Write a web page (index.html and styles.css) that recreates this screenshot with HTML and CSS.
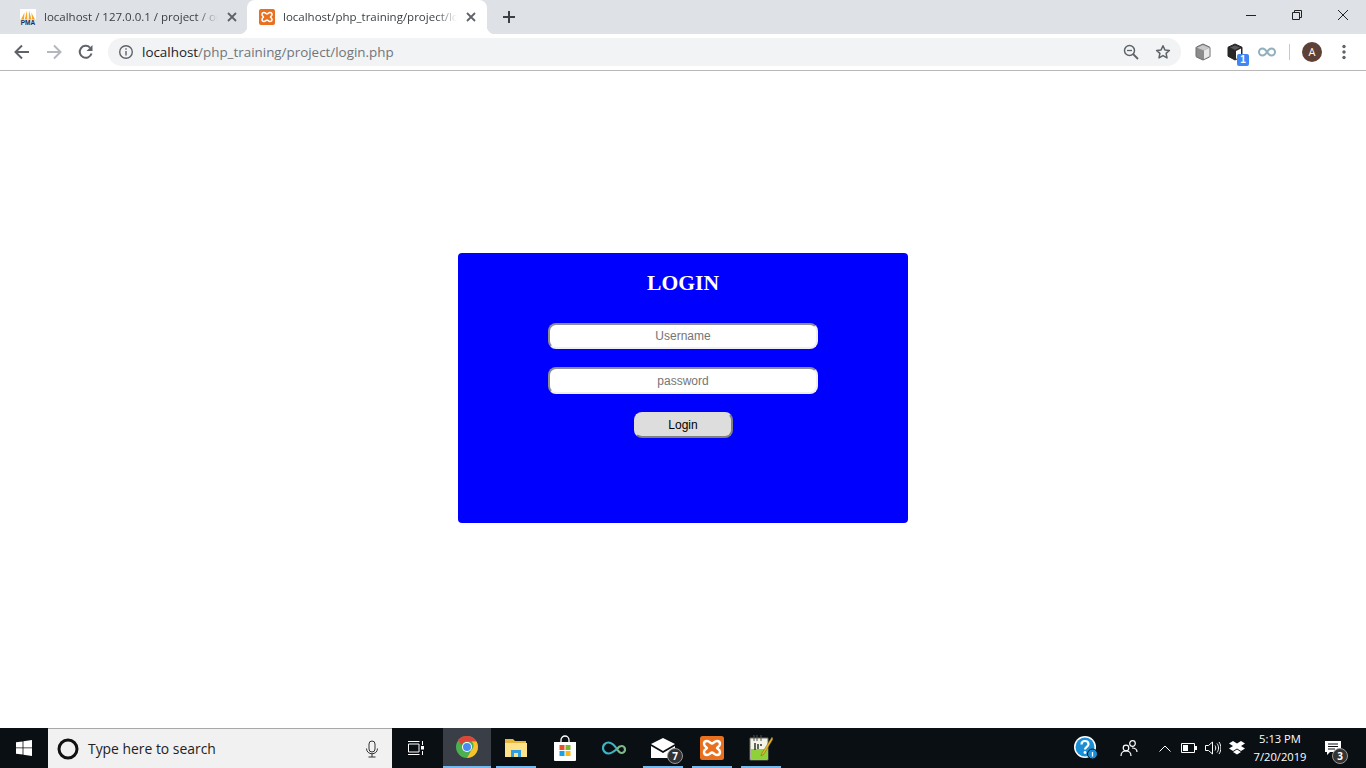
FILE: index.html
```html
<!DOCTYPE html>
<html lang="en">
<head>
<meta charset="utf-8">
<title>localhost/php_training/project/login.php</title>
<link rel="stylesheet" href="styles.css">
</head>
<body>
<div class="window">
  <header class="chrome">
    <div class="tabstrip">
      <div class="tab tab-back">
        <svg class="favicon" width="16" height="16" viewBox="0 0 16 16"><rect width="16" height="10.500" fill="#fff"/><path d="M1 10.500 4.500 3.500 4 10.500zM4.800 10.500 7 1.500 7.300 10.500zM8.700 10.500 9 1.500 11.500 10.500zM12.200 10.500 11.300 3.500 15 10.500z" fill="#f5a623"/><text x="8" y="16" class="pma">PMA</text></svg>
        <span class="tab-title tab-title-back">localhost / 127.0.0.1 / project / or</span>
        <svg class="tab-close" width="12" height="12" viewBox="0 0 12 12"><path d="M2 2l8 8M10 2l-8 8" stroke="#5f6368" stroke-width="1.800" fill="none"/></svg>
      </div>
      <div class="tab tab-active">
        <svg class="favicon" width="16" height="16" viewBox="0 0 16 16"><rect width="16" height="16" rx="2" fill="#e8701f"/><path d="M5 3.500C6.500 3.500 7 5 8 5s1.500-1.500 3-1.500 2 1 2 2C13 7 11.500 7.300 11.500 8s1.500 1 1.500 2.500-1 2-2 2c-1.500 0-2-1.500-3-1.500s-1.500 1.500-3 1.500-2-1-2-2C3 9 4.500 8.700 4.500 8S3 7 3 5.500s1-2 2-2z" fill="none" stroke="#fff" stroke-width="1.500"/></svg>
        <span class="tab-title">localhost/php_training/project/lo</span>
        <svg class="tab-close" width="12" height="12" viewBox="0 0 12 12"><path d="M2 2l8 8M10 2l-8 8" stroke="#5f6368" stroke-width="1.800" fill="none"/></svg>
      </div>
      <svg class="new-tab" width="12" height="12" viewBox="0 0 12 12"><path d="M6 0v12M0 6h12" stroke="#3c4043" stroke-width="2" fill="none"/></svg>
      <div class="window-controls">
        <span class="win-btn"><svg width="10" height="10" viewBox="0 0 10 10"><path d="M0 5.500h10" stroke="#222" fill="none"/></svg></span>
        <span class="win-btn"><svg width="10" height="10" viewBox="0 0 10 10"><path d="M.5 2.500h7v7h-7zM2.500 2.500v-2h7v7h-2" stroke="#222" fill="none"/></svg></span>
        <span class="win-btn"><svg width="10" height="10" viewBox="0 0 10 10"><path d="M0 0l10 10M10 0L0 10" stroke="#222" fill="none"/></svg></span>
      </div>
    </div>
    <div class="toolbar">
      <span class="tool"><svg width="16" height="16" viewBox="0 0 16 16"><path d="M15 8H2M8 1.500 1.500 8 8 14.500" stroke="#5f6368" stroke-width="2" fill="none"/></svg></span>
      <span class="tool"><svg width="16" height="16" viewBox="0 0 16 16"><path d="M1 8h13M8 1.500 14.500 8 8 14.500" stroke="#b4b7bb" stroke-width="2" fill="none"/></svg></span>
      <span class="tool"><svg width="16" height="16" viewBox="0 0 16 16"><path d="M13.500 9.500A6 6 0 1 1 12 3.600" stroke="#5f6368" stroke-width="2" fill="none"/><path d="M14.500 1v6h-6z" fill="#5f6368"/></svg></span>
      <div class="omnibox">
        <svg class="info" width="16" height="16" viewBox="0 0 16 16"><circle cx="8" cy="8" r="6.300" stroke="#5f6368" stroke-width="1.400" fill="none"/><path d="M7.300 7h1.400v4.500H7.300zM7.300 4.300h1.400v1.400H7.300z" fill="#5f6368"/></svg>
        <span class="url"><span class="url-host">localhost</span>/php_training/project/login.php</span>
        <span class="tool"><svg width="16" height="16" viewBox="0 0 16 16"><circle cx="6.500" cy="6.500" r="5" stroke="#5f6368" stroke-width="1.500" fill="none"/><path d="M10 10l5 5" stroke="#5f6368" stroke-width="1.800"/><path d="M4 6.500h5" stroke="#5f6368" stroke-width="1.300"/></svg></span>
        <span class="tool"><svg width="16" height="16" viewBox="0 0 16 16"><path d="M8 1.800l1.900 4.100 4.500.5-3.300 3 .9 4.500L8 11.600l-4 2.300.9-4.500-3.300-3 4.500-.5z" stroke="#5f6368" stroke-width="1.500" fill="none" stroke-linejoin="round"/></svg></span>
      </div>
      <span class="tool tool-first"><svg width="18" height="18" viewBox="0 0 18 18"><path d="M9 1l6.500 3c.4.200.5.500.5 1v8c0 .5-.2.800-.5 1L9 17l-6.500-3c-.4-.2-.5-.5-.5-1V5c0-.5.200-.8.500-1z" fill="#8c8c8c" stroke="#6e6e6e"/><path d="M9 2l6 2.800L10 7.500 3 4.800z" fill="#c9c9c9"/><path d="M10 7.500l5.500-2.700v8.400L10 16z" fill="#e8e8e8"/></svg></span>
      <span class="tool tool-badged"><svg width="18" height="18" viewBox="0 0 18 18"><path d="M9 1l7 3.200v9L9 17l-7-3.800v-9z" fill="#262626" stroke="#262626" stroke-linejoin="round"/><path d="M10 8l5-2.500v7L10 16z" fill="#fff"/><path d="M9 2.500l5 2L9 7 4 4.500z" fill="#5a5a5a"/></svg><span class="ext-badge">1</span></span>
      <span class="tool"><svg width="18" height="10" viewBox="0 0 18 10"><path d="M9 5C7.500 2.500 6 1.500 4.500 1.500a3.500 3.500 0 0 0 0 7C6 8.500 7.500 7.500 9 5c1.500-2.500 3-3.500 4.500-3.500a3.500 3.500 0 0 1 0 7C12 8.500 10.500 7.500 9 5z" fill="none" stroke="#8fb0bd" stroke-width="2"/></svg></span>
      <span class="tool-sep"></span>
      <span class="avatar">A</span>
      <span class="tool tool-menu"><svg width="4" height="16" viewBox="0 0 4 16"><circle cx="2" cy="2.500" r="1.700" fill="#5f6368"/><circle cx="2" cy="8" r="1.700" fill="#5f6368"/><circle cx="2" cy="13.500" r="1.700" fill="#5f6368"/></svg></span>
    </div>
  </header>

  <main class="page">
    <form class="login-card">
      <h2 class="login-title">LOGIN</h2>
      <input class="field" type="text" placeholder="Username">
      <input class="field" type="password" placeholder="password">
      <button class="login-btn" type="button">Login</button>
    </form>
  </main>

  <footer class="taskbar">
    <span class="start"><svg width="16" height="16" viewBox="0 0 16 16"><path d="M0 2.300 6.600 1.400v6.100H0zM7.400 1.300 16 0v7.500H7.400zM0 8.300h6.600v6.200L0 13.700zM7.400 8.300H16V16l-8.600-1.300z" fill="#fff"/></svg></span>
    <div class="search">
      <svg class="cortana" width="22" height="22" viewBox="0 0 22 22"><circle cx="11" cy="11" r="9" fill="none" stroke="#111" stroke-width="3"/></svg>
      <span class="search-text">Type here to search</span>
      <svg class="mic" width="14" height="18" viewBox="0 0 14 18"><rect x="4" y="1" width="6" height="11" rx="3" fill="none" stroke="#333"/><path d="M1.500 8.500c0 7 11 7 11 0M7 14v3M3.500 17h7" fill="none" stroke="#333"/></svg>
    </div>
    <span class="task-view"><svg width="16" height="14" viewBox="0 0 16 14"><path d="M.5 3h10.500v8H.5zM0 .5h11.500M0 13.500h11.500M14.500 0v4M14.500 10v4" stroke="#fff" fill="none"/><rect x="13" y="5" width="3" height="3.500" fill="#fff"/></svg></span>
    <div class="task-apps">
      <span class="app app-active"><svg width="24" height="24" viewBox="0 0 24 24"><circle cx="12" cy="12" r="11" fill="#4caf50"/><path d="M12 1a11 11 0 0 1 9.500 5.500H12a5.500 5.500 0 0 0-5.300 4L3 4.800A11 11 0 0 1 12 1z" fill="#e0453a"/><path d="M21.500 6.500A11 11 0 0 1 12 23l4.700-8.200a5.500 5.500 0 0 0 0-8.300z" fill="#fbc02d"/><circle cx="12" cy="12" r="5" fill="#fff"/><circle cx="12" cy="12" r="4" fill="#4a8af4"/></svg></span>
      <span class="app app-open"><svg width="22" height="20" viewBox="0 0 22 20"><path d="M0 1h8l2 2h11v3H0z" fill="#e7b63f"/><path d="M0 5h22v14H0z" fill="#fde28a"/><path d="M6 12h10v7h-3v-4H9v4H6z" fill="#2f9fe0"/></svg></span>
      <span class="app"><svg width="24" height="26" viewBox="0 0 24 26"><path d="M8 8V5a4 4 0 0 1 8 0v3" fill="none" stroke="#fff" stroke-width="1.300"/><path d="M1 7h22v18a1 1 0 0 1-1 1H2a1 1 0 0 1-1-1z" fill="#fff"/><rect x="6.500" y="10" width="5" height="5" fill="#e8502a"/><rect x="12.500" y="10" width="5" height="5" fill="#7cb928"/><rect x="6.500" y="16" width="5" height="5" fill="#19a3e4"/><rect x="12.500" y="16" width="5" height="5" fill="#fcb814"/></svg></span>
      <span class="app"><svg width="24" height="14" viewBox="0 0 24 14"><path d="M15 8C12 3.500 9.500 1.500 6.500 1.500a5.500 5.500 0 0 0 0 11C9.500 12.500 12 10.500 15 8" fill="none" stroke="#3fb2c4" stroke-width="2.200"/><path d="M15 8c1.500-2 3-3 4.500-3a3.500 3.500 0 0 1 0 7c-1.500 0-3-1.500-4.500-4" fill="none" stroke="#7fb98a" stroke-width="2.200"/></svg></span>
      <span class="app app-open"><svg width="24" height="20" viewBox="0 0 24 20"><path d="M0 6 12 0l12 6-12 7z" fill="#fff"/><path d="M0 8l12 7 12-7v12H0z" fill="#fff"/></svg><span class="count-badge count-mail">7</span></span>
      <span class="app app-open"><svg width="24" height="24" viewBox="0 0 24 24"><rect width="24" height="24" rx="2.500" fill="#e8701f"/><path d="M7 5C9.500 5 10.500 7.500 12 7.500S14.500 5 17 5s3 2 3 3c0 2.500-3 3-3 4s3 1.500 3 4-1.500 3-3 3c-2.500 0-3.500-2.500-5-2.500S9.500 19 7 19s-3-2-3-3c0-2.500 3-3 3-4S4 10.500 4 8s1.500-3 3-3z" fill="none" stroke="#fff" stroke-width="2.400"/></svg></span>
      <span class="app app-open"><svg width="24" height="26" viewBox="0 0 24 26"><path d="M1 3h18v22H1z" fill="#f3f3e6" stroke="#6b6b5e"/><path d="M2 14h16v10H2z" fill="#8fd13a"/><path d="M5 0v6M8 0v6M12 0v6" stroke="#555" stroke-width="1"/><path d="M6 8v7M9 9v5M12 9v2" stroke="#333" stroke-width="1.500"/><path d="M23 2 13 18l-1 3 3-2L24 4z" fill="#e8b92d" stroke="#7a5a10" stroke-width=".5"/></svg></span>
    </div>
    <div class="tray">
      <span class="tray-help"><svg width="24" height="24" viewBox="0 0 24 24"><circle cx="11" cy="11" r="11" fill="#fff"/><circle cx="11" cy="11" r="9.500" fill="#1a8fd6"/><path d="M7.500 8.500C7.500 6 9 5 11 5s3.500 1.300 3.500 3.200c0 2.600-3.500 2.600-3.500 5.300" fill="none" stroke="#fff" stroke-width="2.200"/><circle cx="11" cy="16.500" r="1.400" fill="#fff"/><circle cx="18.500" cy="18" r="5" fill="#1a8fd6" stroke="#0a0f14"/><path d="M18.500 16v4.500" stroke="#fff" stroke-width="1.300"/></svg></span>
      <span class="tray-people"><svg width="18" height="16" viewBox="0 0 18 16"><circle cx="6" cy="8" r="2.800" fill="none" stroke="#fff" stroke-width="1.200"/><path d="M1 16c0-3 2-5 5-5s5 2 5 5" fill="none" stroke="#fff" stroke-width="1.200"/><circle cx="12.500" cy="3.500" r="2.800" fill="none" stroke="#fff" stroke-width="1.200"/><path d="M12 8c3 0 5 1.500 5 4" fill="none" stroke="#fff" stroke-width="1.200"/></svg></span>
      <span class="tray-icon"><svg width="12" height="7" viewBox="0 0 12 7"><path d="M.5 6.500 6 1l5.500 5.500" fill="none" stroke="#fff"/></svg></span>
      <span class="tray-icon"><svg width="16" height="10" viewBox="0 0 16 10"><path d="M.5.500h13v9H.5z" fill="none" stroke="#fff"/><rect x="2" y="2" width="5" height="6" fill="#fff"/><rect x="14" y="3" width="2" height="4" fill="#fff"/></svg></span>
      <span class="tray-icon"><svg width="16" height="14" viewBox="0 0 16 14"><path d="M.5 4.500h3L7.500 1v12l-4-3.500h-3z" fill="none" stroke="#fff"/><path d="M10 4.500c1 1.500 1 3.500 0 5M12 2.500c2 2.500 2 6.500 0 9M14 1c2.500 3.500 2.500 8.500 0 12" fill="none" stroke="#fff"/></svg></span>
      <span class="tray-icon"><svg width="16" height="14" viewBox="0 0 16 14"><path d="M4 0 8 2.500 12 0l4 2.500L12 5l4 2.500L12 10 8 7.500 4 10 0 7.500 4 5 0 2.500zM4 11l4-2.500 4 2.500-4 2.500z" fill="#fff"/></svg></span>
      <div class="clock"><span>5:13 PM</span><span>7/20/2019</span></div>
      <span class="notify"><svg width="16" height="15" viewBox="0 0 16 15"><path d="M0 0h16v11H5l-3 3v-3H0z" fill="#fff"/><path d="M3 3h10M3 5.500h10M3 8h7" stroke="#0a0f14"/></svg><span class="count-badge count-notify">3</span></span>
    </div>
  </footer>
</div>
</body>
</html>
```
FILE: styles.css
```css
* { box-sizing: border-box; }
html, body { margin: 0; padding: 0; }
.window {
  width: 1366px;
  height: 768px;
  display: flex;
  flex-direction: column;
  overflow: hidden;
  background: #fff;
  font-family: "Open Sans", "Noto Sans", sans-serif;
}

/* browser frame */
.chrome { flex: none; }
.tabstrip {
  height: 34px;
  display: flex;
  align-items: flex-end;
  padding-left: 8px;
  background: #dee1e6;
}
.tab {
  height: 34px;
  display: flex;
  align-items: center;
  gap: 8px;
  padding-left: 12px;
  font-size: 11.5px;
  color: #3c4043;
  position: relative;
}
.tab-back { width: 239px; padding-right: 9px; }
.tab-active {
  width: 240px;
  padding-right: 10px;
  background: #fff;
  border-radius: 8px 8px 0 0;
  color: #3c4043;
}
.tab-active::before,
.tab-active::after {
  content: "";
  position: absolute;
  bottom: 0;
  width: 8px;
  height: 8px;
}
.tab-active::before {
  left: -8px;
  background: radial-gradient(circle at 0 0, transparent 8px, #fff 8.5px);
}
.tab-active::after {
  right: -8px;
  background: radial-gradient(circle at 100% 0, transparent 8px, #fff 8.5px);
}
.favicon { flex: none; }
.pma { font: bold 6.5px "Liberation Sans", sans-serif; fill: #1f2a5a; text-anchor: middle; }
.tab-title {
  flex: 1;
  min-width: 0;
  margin-bottom: 2px;
  white-space: nowrap;
  -webkit-mask-image: linear-gradient(to right, #000 88%, transparent 100%);
  mask-image: linear-gradient(to right, #000 88%, transparent 100%);
}
.tab-close { flex: none; }
.new-tab { flex: none; margin: 0 0 11px 16px; }
.window-controls { margin-left: auto; display: flex; align-self: stretch; }
.win-btn {
  width: 46px;
  height: 30px;
  display: flex;
  align-items: center;
  justify-content: center;
}

.toolbar {
  height: 37px;
  display: flex;
  align-items: center;
  padding: 0 6px 1px;
  background: #fff;
  border-bottom: 1px solid #b8b8b8;
}
.tool {
  flex: none;
  width: 32px;
  height: 28px;
  display: flex;
  align-items: center;
  justify-content: center;
  position: relative;
}
.omnibox {
  flex: 1;
  height: 28px;
  margin: 0 6px;
  padding: 0 2px 0 10px;
  display: flex;
  align-items: center;
  gap: 8px;
  border-radius: 14px;
  background: #f1f3f4;
}
.omnibox .tool { margin-left: -8px; }
.omnibox .tool:first-of-type { margin-left: 0; }
.info { flex: none; }
.url {
  flex: 1;
  font-size: 13.4px;
  color: #70757a;
  white-space: nowrap;
}
.url-host { color: #202124; }
.ext-badge {
  position: absolute;
  left: 18px;
  top: 16px;
  width: 12px;
  height: 12px;
  border-radius: 2px;
  background: #3f87f5;
  color: #fff;
  font: bold 10px/12px "Liberation Sans", sans-serif;
  text-align: center;
}
.tool-sep {
  flex: none;
  width: 1px;
  height: 16px;
  margin-left: 6px;
  background: #c6c8cb;
}
.avatar {
  flex: none;
  width: 20px;
  height: 20px;
  margin-left: 12px;
  border-radius: 50%;
  background: #5d4037;
  color: #fff;
  font-size: 11px;
  line-height: 20px;
  text-align: center;
}
.tool-menu { margin-left: 6px; }

/* page content */
.page {
  flex: 1;
  min-height: 0;
  padding-top: 182px;
  background: #fff;
}
.login-card {
  width: 450px;
  height: 270px;
  margin: 0 auto;
  padding-top: 18px;
  display: flex;
  flex-direction: column;
  align-items: center;
  gap: 18px;
  border-radius: 4px;
  background: #0000ff;
}
.login-title {
  margin: 0 0 9px;
  font: bold 21.6px/25px "Liberation Serif", serif;
  color: #fff;
}
.field {
  width: 270px;
  height: 26.400px;
  padding: 0 4px;
  border-width: 2px;
  border-style: solid;
  border-color: #8f8f8f #eeeeee #eeeeee #8f8f8f;
  border-radius: 8px;
  background: #fff;
  font: 12px "Liberation Sans", sans-serif;
  text-align: center;
  outline: none;
}
.field::placeholder { color: #757575; opacity: 1; }
.login-btn {
  width: 99px;
  height: 26.400px;
  padding: 0;
  border-width: 2px;
  border-style: solid;
  border-color: #dddddd #808080 #808080 #dddddd;
  border-radius: 8px;
  background: #dddddd;
  color: #000;
  font: 12px "Liberation Sans", sans-serif;
}

/* taskbar */
.taskbar {
  flex: none;
  height: 40px;
  display: flex;
  background: #0a0f14;
  color: #fff;
}
.start {
  flex: none;
  width: 48px;
  display: flex;
  align-items: center;
  justify-content: center;
}
.search {
  flex: none;
  width: 344px;
  display: flex;
  align-items: center;
  padding: 0 12px 0 9px;
  gap: 9px;
  background: #f1f1f1;
  border-top: 1px solid #a8a8a8;
  color: #222;
}
.cortana { flex: none; }
.search-text { flex: 1; font-size: 13.9px; }
.mic { flex: none; margin-right: 1px; }
.task-view {
  flex: none;
  width: 48px;
  display: flex;
  align-items: center;
  justify-content: center;
}
.task-apps { display: flex; gap: 1px; margin-left: 3px; }
.app {
  width: 48px;
  height: 40px;
  display: flex;
  align-items: center;
  justify-content: center;
  position: relative;
}
.app-active { background: #3a3f47; border-bottom: 2px solid #76b9ed; }
.app-open::after {
  content: "";
  position: absolute;
  left: 4px;
  right: 4px;
  bottom: 0;
  height: 2px;
  background: #76b9ed;
}
.count-badge {
  position: absolute;
  width: 16px;
  height: 16px;
  border-radius: 50%;
  background: #333;
  border: 1px solid #999;
  color: #fff;
  font: bold 10px/14px "Open Sans", sans-serif;
  text-align: center;
}
.count-mail { left: 28px; top: 20px; }
.tray { margin-left: auto; display: flex; align-items: center; padding-right: 9px; }
.tray-help { width: 38px; display: flex; justify-content: center; }
.tray-people { width: 48px; display: flex; justify-content: center; }
.tray-icon { width: 24px; display: flex; justify-content: center; }
.clock {
  width: 60px;
  padding-left: 2px;
  display: flex;
  flex-direction: column;
  align-items: center;
  font-size: 11.2px;
  line-height: 18px;
}
.notify {
  width: 48px;
  height: 40px;
  display: flex;
  align-items: center;
  justify-content: center;
  position: relative;
}
.count-notify { left: 23px; top: 20px; }
```
